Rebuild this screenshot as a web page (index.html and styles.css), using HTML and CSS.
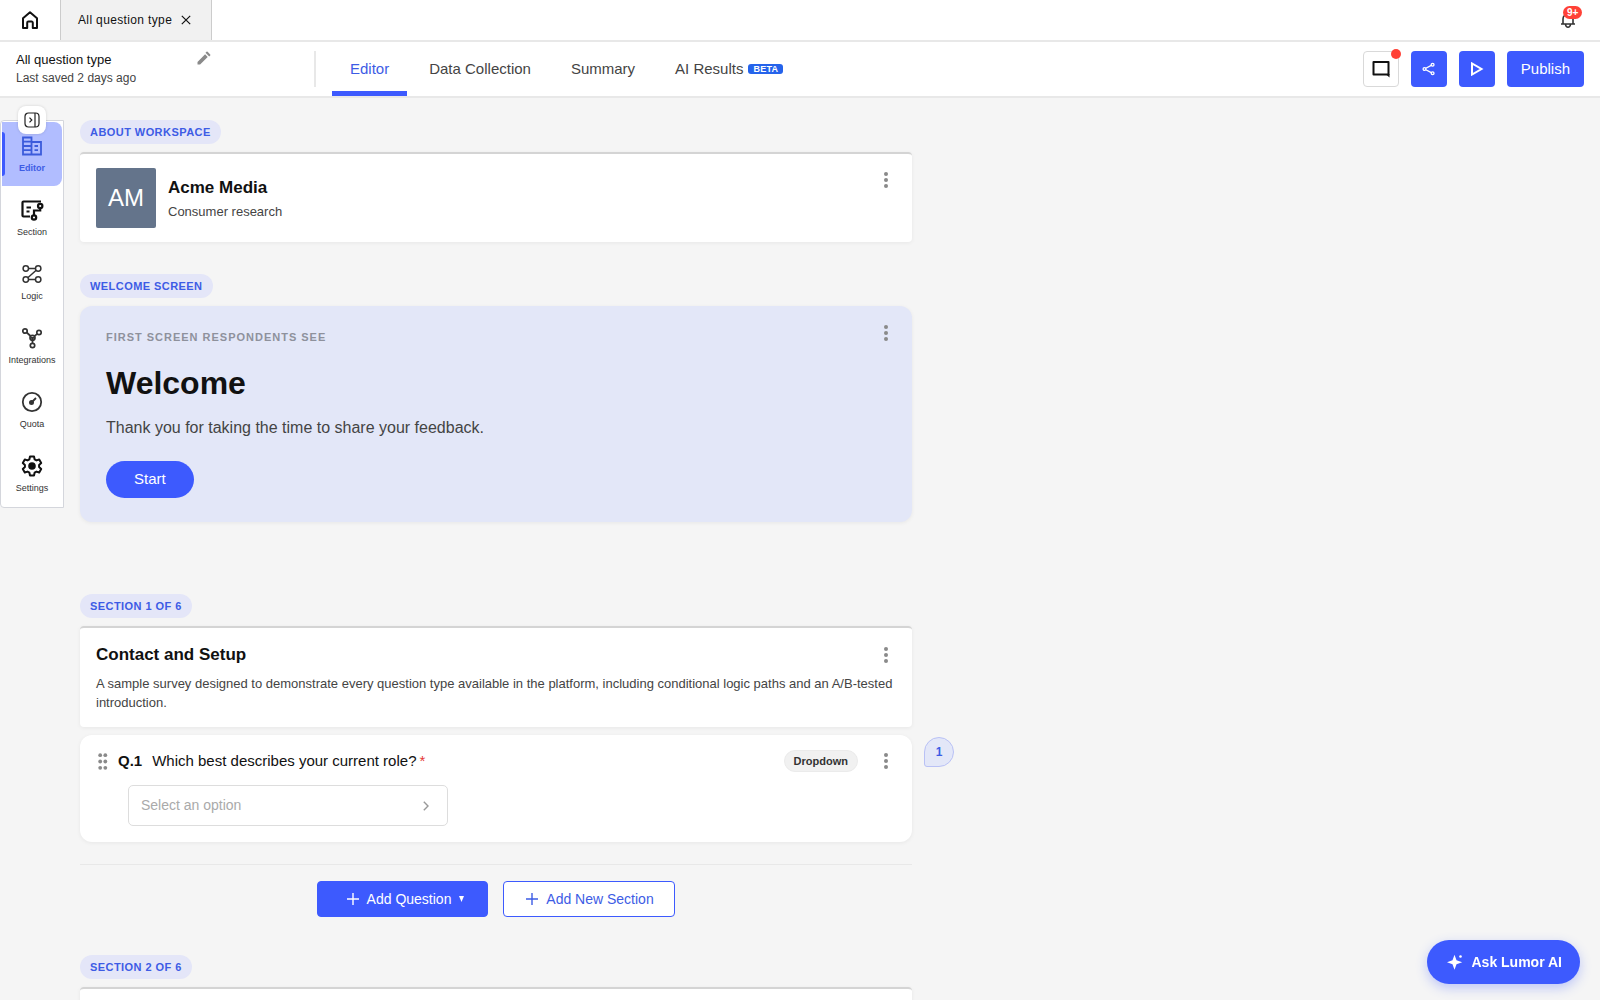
FILE: index.html
```
<!DOCTYPE html>
<html lang="en">
<head>
    <meta charset="UTF-8">
    <title>All question type</title>
    <link rel="stylesheet" href="styles.css">
</head>
<body>
    <div class="topbar">
        <a class="home" href="#" aria-label="Home">
            <svg width="20" height="20" viewBox="0 0 20 20" fill="none" stroke="#111" stroke-width="2" stroke-linejoin="round"><path d="M3 8.2 10 2.2l7 6V18h-4.2v-5.2a1.2 1.2 0 0 0-1.2-1.2H8.4a1.2 1.2 0 0 0-1.2 1.2V18H3z"/></svg>
        </a>
        <div class="file-tab">
            <span>All question type</span>
            <button class="plain" aria-label="Close tab">
                <svg width="10" height="10" viewBox="0 0 10 10" stroke="#111" stroke-width="1.2"><path d="M.8.8l8.4 8.4M9.2.8.8 9.2"/></svg>
            </button>
        </div>
        <button class="plain bell" aria-label="Notifications">
            <svg width="18" height="18" viewBox="0 0 18 18" fill="none" stroke="#333" stroke-width="1.6"><path d="M2 13h14M4 13V8a5 5 0 0 1 10 0v5M6.5 13.500c.3 2 1.2 2.800 2.5 2.800s2.200-.8 2.500-2.800"/></svg>
            <span class="bell-count">9+</span>
        </button>
    </div>

    <header class="header">
        <div class="survey">
            <div>
                <div class="survey-name">All question type</div>
                <div class="survey-saved">Last saved 2 days ago</div>
            </div>
            <button class="plain" aria-label="Rename">
                <svg width="14" height="14" viewBox="0 0 14 14" fill="#8a8a8a"><path d="M.5 10.900V13.500h2.600l7.600-7.600-2.600-2.600zM13.200 3.400 10.600.8a.8.8 0 0 0-1.100 0l-1 1 3.700 3.700 1-1a.8.8 0 0 0 0-1.100z"/></svg>
            </button>
        </div>
        <nav class="tabs">
            <a class="tab active" href="#">Editor</a>
            <a class="tab" href="#">Data Collection</a>
            <a class="tab" href="#">Summary</a>
            <a class="tab" href="#">AI Results <span class="beta">BETA</span></a>
        </nav>
        <div class="actions">
            <button class="btn-icon outline" aria-label="Comments">
                <svg width="20" height="20" viewBox="0 0 20 20" fill="none" stroke="#111" stroke-width="2"><path d="M2.500 3h15v12.500h-15z" stroke-linejoin="round"/><path d="M14.500 15h4v3.500z" fill="#111" stroke="none"/></svg>
                <span class="dot"></span>
            </button>
            <button class="btn-icon" aria-label="Share">
                <svg width="14" height="14" viewBox="0 0 14 14" fill="none" stroke="#fff" stroke-width="1.300"><path d="M3.800 6.300 9.300 3.400M3.800 7.700l5.500 2.900"/><circle cx="2.500" cy="7" r="1.400"/><circle cx="10.600" cy="2.700" r="1.400"/><circle cx="10.600" cy="11.300" r="1.400"/></svg>
            </button>
            <button class="btn-icon" aria-label="Preview">
                <svg width="14" height="14" viewBox="0 0 14 14" fill="none" stroke="#fff" stroke-width="2"><path d="M2 1.500v11L11.500 7z"/></svg>
            </button>
            <button class="publish">Publish</button>
        </div>
    </header>

    <div class="page">
        <aside class="sidebar">
            <button class="expand" aria-label="Expand menu">
                <svg width="16" height="16" viewBox="0 0 16 16" fill="none" stroke="#222" stroke-width="1.200"><rect x="1" y="1" width="14" height="14" rx="3.500"/><path d="M11 1v14M5.500 5.700 7.800 8l-2.300 2.300"/></svg>
            </button>
            <a class="side-item active" href="#">
                <svg width="24" height="24" viewBox="0 0 24 24" fill="none" stroke="#3b5bdb" stroke-width="1.800"><path d="M3 3.500h8.500v17H3zM11.500 8H21v12.500h-9.500M3 7.700h8.500M3 12h8.500M3 16.200h8.500M14.500 12H18M14.500 16.200H18"/></svg>
                <span>Editor</span>
            </a>
            <a class="side-item" href="#">
                <svg width="24" height="24" viewBox="0 0 24 24" fill="none" stroke="#111" stroke-width="2.200"><path d="M10 18.500H3.500a1 1 0 0 1-1-1V4.500a1 1 0 0 1 1-1H21M6.500 9.500H11M6.500 13.500H9.500"/><circle cx="20.200" cy="8" r="2.200"/><circle cx="14" cy="19.500" r="2.200"/><path d="M20.200 10.200v2.300H14v4.800"/></svg>
                <span>Section</span>
            </a>
            <a class="side-item" href="#">
                <svg width="24" height="24" viewBox="0 0 24 24" fill="none" stroke="#333" stroke-width="1.500"><circle cx="5.800" cy="6.500" r="2.700"/><circle cx="18.200" cy="6.500" r="2.700"/><circle cx="5.800" cy="17.500" r="2.700"/><circle cx="18.200" cy="17.500" r="2.700"/><path d="M8.500 6.500h7M8.500 17.500h7M16.200 8.300l-8.400 7.400"/></svg>
                <span>Logic</span>
            </a>
            <a class="side-item" href="#">
                <svg width="24" height="24" viewBox="0 0 24 24" fill="none" stroke="#333" stroke-width="1.700"><circle cx="5" cy="5" r="2.200"/><circle cx="19" cy="6.500" r="2.200"/><circle cx="12.500" cy="11.800" r="2.500"/><circle cx="12.500" cy="19.500" r="2.200"/><path d="M6.700 6.500 10.500 10M17.200 7.900l-2.700 2.300M12.500 12v5.300M10.500 11.800h4"/></svg>
                <span>Integrations</span>
            </a>
            <a class="side-item" href="#">
                <svg width="24" height="24" viewBox="0 0 24 24" fill="none" stroke="#333" stroke-width="1.800"><circle cx="12" cy="12" r="9.200"/><circle cx="11.500" cy="12.500" r="1.600" fill="#333"/><path d="M11.500 12.500 16 8"/></svg>
                <span>Quota</span>
            </a>
            <a class="side-item" href="#">
                <svg width="24" height="24" viewBox="0 0 24 24" fill="none" stroke="#111" stroke-width="2" stroke-linejoin="round"><path d="M10 3h4l.6 2.800 1.900 1.100 2.700-.9 2 3.500-2.100 1.900v2.200l2.100 1.900-2 3.500-2.700-.9-1.900 1.100L14 22h-4l-.6-2.800-1.900-1.100-2.700.9-2-3.500 2.100-1.900v-2.200L2.800 9.500l2-3.500 2.700.9 1.900-1.100z" transform="translate(0 -.5)"/><circle cx="12" cy="12" r="2.800" fill="#111"/></svg>
                <span>Settings</span>
            </a>
        </aside>

        <main class="content">
            <section class="block">
                <span class="badge">ABOUT WORKSPACE</span>
                <div class="card workspace">
                    <div class="avatar">AM</div>
                    <div class="workspace-info">
                        <h2>Acme Media</h2>
                        <p>Consumer research</p>
                    </div>
                    <button class="kebab" aria-label="More"><svg width="4" height="16" viewBox="0 0 4 16"><circle cx="2" cy="2" r="2"/><circle cx="2" cy="8" r="2"/><circle cx="2" cy="14" r="2"/></svg></button>
                </div>
            </section>

            <section class="block welcome-block">
                <span class="badge">WELCOME SCREEN</span>
                <div class="welcome">
                    <div>
                        <div class="eyebrow">FIRST SCREEN RESPONDENTS SEE</div>
                        <h1>Welcome</h1>
                        <p>Thank you for taking the time to share your feedback.</p>
                        <button class="start">Start</button>
                    </div>
                    <button class="kebab" aria-label="More"><svg width="4" height="16" viewBox="0 0 4 16"><circle cx="2" cy="2" r="2"/><circle cx="2" cy="8" r="2"/><circle cx="2" cy="14" r="2"/></svg></button>
                </div>
            </section>

            <section class="block">
                <span class="badge">SECTION 1 OF 6</span>
                <div class="card section-card">
                    <div class="section-head">
                        <h2>Contact and Setup</h2>
                        <button class="kebab" aria-label="More"><svg width="4" height="16" viewBox="0 0 4 16"><circle cx="2" cy="2" r="2"/><circle cx="2" cy="8" r="2"/><circle cx="2" cy="14" r="2"/></svg></button>
                    </div>
                    <p>A sample survey designed to demonstrate every question type available in the platform, including conditional logic paths and an A/B-tested introduction.</p>
                </div>

                <div class="question">
                    <div class="question-head">
                        <svg class="drag" width="10" height="17" viewBox="0 0 10 17" fill="#8a8a8a"><circle cx="2.200" cy="2.200" r="1.900"/><circle cx="7.300" cy="2.200" r="1.900"/><circle cx="2.200" cy="8.500" r="1.900"/><circle cx="7.300" cy="8.500" r="1.900"/><circle cx="2.200" cy="14.800" r="1.900"/><circle cx="7.300" cy="14.800" r="1.900"/></svg>
                        <b>Q.1</b>
                        <label for="role">Which best describes your current role?<span class="required">*</span></label>
                        <span class="type">Dropdown</span>
                        <button class="kebab" aria-label="More"><svg width="4" height="16" viewBox="0 0 4 16"><circle cx="2" cy="2" r="2"/><circle cx="2" cy="8" r="2"/><circle cx="2" cy="14" r="2"/></svg></button>
                    </div>
                    <div class="select-box">
                        <select id="role">
                            <option>Select an option</option>
                        </select>
                        <svg width="6" height="10" viewBox="0 0 6 10" fill="none" stroke="#999" stroke-width="1.400"><path d="M.8.8 5 5 .8 9.200"/></svg>
                    </div>
                    <button class="comment-pin">1</button>
                </div>

                <div class="add-row">
                    <button class="add primary">
                        <svg width="12" height="12" viewBox="0 0 12 12" stroke="currentColor" stroke-width="1.400"><path d="M6 0v12M0 6h12"/></svg>
                        Add Question
                        <svg width="5" height="6" viewBox="0 0 5 6" fill="currentColor"><path d="M0 0h5L2.500 6z"/></svg>
                    </button>
                    <button class="add">
                        <svg width="12" height="12" viewBox="0 0 12 12" stroke="currentColor" stroke-width="1.400"><path d="M6 0v12M0 6h12"/></svg>
                        Add New Section
                    </button>
                </div>
            </section>

            <section class="block">
                <span class="badge">SECTION 2 OF 6</span>
                <div class="card section-card"></div>
            </section>
        </main>
    </div>

    <button class="ask">
        <svg width="16" height="16" viewBox="0 0 16 16" fill="#fff"><path d="M7.500.8 9.500 6.300 15.200 8.300 9.500 10.300 7.500 15.800 5.500 10.300 0 8.300 5.500 6.300z"/><circle cx="13.500" cy="2.500" r="1.300"/></svg>
        Ask Lumor AI
    </button>
</body>
</html>
```

FILE: styles.css
```
* { box-sizing: border-box; }
body { display: flex; flex-direction: column; height: 100vh; margin: 0; overflow: hidden; background: #f5f5f5; color: #111; font-family: "Liberation Sans", Arial, sans-serif; font-size: 13px; }
h1, h2, p { margin: 0; }
a { color: inherit; text-decoration: none; }
button, select { font-family: inherit; cursor: pointer; }
svg { display: block; flex-shrink: 0; }
.plain { padding: 0; border: none; background: none; }

/* top bar */
.topbar { display: flex; flex-shrink: 0; height: 42px; padding-right: 23px; background: #fff; border-bottom: 2px solid #e8e8e8; }
.home { display: flex; align-items: center; justify-content: center; width: 60px; }
.file-tab { display: flex; align-items: center; gap: 9px; padding: 0 20px 0 17px; background: #f1f1f1; border: solid #ccc; border-width: 0 1px; font-size: 12px; letter-spacing: 0.03em; }
.bell { position: relative; margin-left: auto; }
.bell-count { position: absolute; top: 6px; left: 4px; padding: 0 4px; border-radius: 7px; background: #ff4136; color: #fff; font-size: 10px; font-weight: bold; line-height: 13px; }

/* header */
.header { display: flex; flex-shrink: 0; align-items: center; height: 56px; padding: 0 16px; background: #fff; border-bottom: 2px solid #e8e8e8; }
.survey { display: flex; justify-content: space-between; align-items: flex-start; width: 300px; height: 36px; padding-right: 103px; border-right: 2px solid #e8e8e8; }
.survey-name { line-height: 18px; }
.survey-saved { color: #444; font-size: 12px; line-height: 18px; }
.tabs { display: flex; align-self: stretch; gap: 4px; margin-left: 16px; }
.tab { display: flex; align-items: center; gap: 5px; padding: 4px 18px 0; border-bottom: 5px solid transparent; color: #444; font-size: 15px; }
.tab.active { color: #3d5ce5; border-color: #3d5afe; }
.beta { padding: 0 5px; border-radius: 3px; background: #2563eb; color: #fff; font-size: 9px; font-weight: bold; line-height: 10px; letter-spacing: 0.03em; }
.actions { display: flex; gap: 12px; margin-left: auto; }
.btn-icon { position: relative; display: flex; align-items: center; justify-content: center; width: 36px; height: 36px; padding: 0; border: none; border-radius: 4px; background: #3d5afe; }
.btn-icon.outline { background: #fff; border: 1px solid #d9d9d9; }
.dot { position: absolute; top: -3px; right: -3px; width: 10px; height: 10px; border-radius: 50%; background: #ff4136; }
.publish { height: 36px; padding: 0 14px 2px; border: none; border-radius: 4px; background: #3d5afe; color: #fff; font-size: 15px; }

/* sidebar */
.page { display: flex; flex: 1; align-items: flex-start; min-height: 0; padding-top: 22px; }
.sidebar { position: relative; flex-shrink: 0; width: 64px; padding: 1px; background: #fff; border: 1px solid #d4d6dc; border-radius: 4px 0 0 4px; }
.expand { position: absolute; top: -15px; left: 17px; z-index: 1; display: flex; align-items: center; justify-content: center; width: 28px; height: 28px; padding: 0; border: none; border-radius: 8px; background: #fff; box-shadow: 0 0 3px rgba(0, 0, 0, 0.15); }
.side-item { position: relative; display: flex; flex-direction: column; align-items: center; gap: 2px; height: 64px; padding-top: 12px; color: #333; font-size: 9px; line-height: 16px; }
.side-item.active { border-radius: 0 8px 8px 0; background: #b1bdff; color: #3d5ce5; font-weight: bold; }
.side-item.active::before { content: ""; position: absolute; top: 10px; left: 0; width: 3px; height: 44px; border-radius: 0 3px 3px 0; background: #3d5afe; }

/* editor */
.content { width: 832px; max-width: 100%; margin-left: 16px; }
.block { margin-bottom: 32px; }
.welcome-block { margin-bottom: 72px; }
.badge { display: block; width: fit-content; margin-bottom: 8px; padding: 0 10px; border-radius: 12px; background: #e4e6f8; color: #3d5ce5; font-size: 11px; font-weight: bold; line-height: 24px; letter-spacing: 0.04em; }
.card { padding: 14px 16px; background: #fff; border-top: 2px solid #d4d4d4; border-radius: 4px; box-shadow: 0 1px 4px rgba(0, 0, 0, 0.06); }
.card h2 { font-size: 17px; line-height: 24px; }
.card p { color: #444; font-size: 13px; line-height: 19px; }
.kebab { display: flex; align-items: center; justify-content: center; width: 20px; height: 24px; margin-left: auto; padding: 0; border: none; background: none; fill: #8a8a8a; }
.workspace { display: flex; gap: 12px; }
.workspace-info { padding-top: 8px; }
.card .workspace-info p { line-height: 24px; }
.workspace-info p { line-height: 24px; }
.avatar { width: 60px; height: 60px; border-radius: 2px; background: #64748b; color: #fff; font-size: 24px; line-height: 60px; text-align: center; }
.welcome { display: flex; align-items: flex-start; padding: 15px 16px 24px 26px; border-radius: 12px; background: #e3e7f8; box-shadow: 0 1px 4px rgba(0, 0, 0, 0.06); }
.eyebrow { margin-top: 7px; color: #8e919c; font-size: 11px; font-weight: bold; line-height: 18px; letter-spacing: 0.09em; }
.welcome h1 { margin-top: 16px; font-size: 32px; line-height: 42px; }
.welcome p { margin-top: 12px; color: #444; font-size: 16px; line-height: 24px; }
.start { height: 37px; margin-top: 21px; padding: 0 28px 2px; border: none; border-radius: 19px; background: #3d5afe; color: #fff; font-size: 15px; }
.section-card { min-height: 101px; padding-top: 15px; }
.section-head { display: flex; margin-bottom: 7px; }

.question { position: relative; height: 107px; margin-top: 8px; padding: 14px 16px; background: #fff; border-radius: 12px; box-shadow: 0 1px 4px rgba(0, 0, 0, 0.06); }
.question-head { display: flex; align-items: center; font-size: 15px; line-height: 24px; }
.drag { margin: 0 10px 0 2px; }
.question-head label { margin-left: 10px; }
.required { margin-left: 3px; color: #e53935; }
.type { margin-left: auto; padding: 0 9px; border: 1px solid #ebebeb; border-radius: 12px; background: #f1f1f1; color: #333; font-size: 11px; font-weight: bold; line-height: 20px; }
.type + .kebab { margin-left: 18px; }
.select-box { display: flex; align-items: center; width: 320px; height: 41px; margin: 12px 0 0 32px; padding-right: 18px; border: 1px solid #ddd; border-radius: 5px; }
.select-box select { flex: 1; height: 39px; padding: 0 0 2px 12px; appearance: none; border: none; background: none; color: #aaa; font-size: 14px; }
.comment-pin { position: absolute; top: 2px; right: -42px; width: 30px; height: 30px; padding: 0; border: 1px solid #b9c1f5; border-radius: 15px 15px 15px 3px; background: #e3e7f8; color: #3d5ce5; font-size: 12px; font-weight: bold; }

.add-row { display: flex; justify-content: center; gap: 15px; margin-top: 22px; padding: 16px 0 6px; border-top: 1px solid #e8e8e8; }
.add { display: flex; align-items: center; justify-content: center; gap: 8px; width: 172px; height: 36px; padding: 0 0 0 2px; border: 1px solid #3d5afe; border-radius: 4px; background: #fff; color: #3d5ce5; font-size: 14px; }
.add.primary { width: 171px; padding-left: 6px; background: #3d5afe; color: #fff; }

.ask { position: fixed; right: 20px; bottom: 16px; display: flex; align-items: center; gap: 9px; height: 44px; padding: 0 18px 0 20px; border: none; border-radius: 22px; background: #3d5afe; color: #fff; font-size: 14px; font-weight: bold; box-shadow: 0 4px 12px rgba(61, 90, 254, 0.3); }
```
